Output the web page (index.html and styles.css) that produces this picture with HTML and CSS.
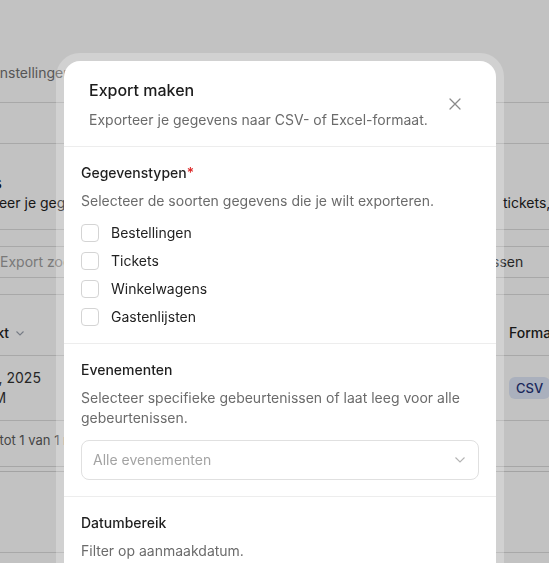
FILE: index.html
```html
<!DOCTYPE html>
<html lang="nl">
<head>
<meta charset="utf-8">
<title>Export maken</title>
<link rel="stylesheet" href="styles.css">
</head>
<body>
<div class="page">
  <div class="topbar"><span class="crumb">Instellingen</span></div>
  <div class="tabs"></div>
  <div class="pagehead">
    <h1 class="ph-title">Exports</h1>
    <div class="split">
      <p class="ph-desc">Exporteer je gegevens naar CSV- of Excel-formaat, inclusief bestellingen,</p>
      <p class="ph-desc-r">tickets, winkelwagens en gastenlijsten.</p>
    </div>
  </div>
  <div class="filters">
    <div class="search">Export zoeken...</div>
    <div class="fselect">Alle gebeurtenissen</div>
  </div>
  <div class="thead">
    <div class="th th-left">Aangemaakt
      <svg class="sort" width="8" height="5" viewBox="0 0 8 5"><path d="M0.5 0.5 L4 4 L7.5 0.5" fill="none" stroke="#9ca3af" stroke-width="1.1"/></svg>
    </div>
    <div class="th">Formaat</div>
  </div>
  <div class="trow">
    <div class="td-date">
      <span class="d1">12 mrt, 2025</span>
      <span class="d2">10:24 AM</span>
    </div>
    <div class="td-fmt"><span class="badge">CSV</span></div>
  </div>
  <div class="tfoot"><span class="count">Toont 1 tot 1 van 1 resultaten</span></div>
  <div class="cardend"></div>
  <div class="blank"></div>
</div>

<div class="overlay"></div>

<div class="modal" role="dialog" aria-labelledby="m-title">
  <div class="panel">
    <div class="m-head">
      <div class="m-titles">
        <h2 class="m-title" id="m-title">Export maken</h2>
        <p class="m-sub">Exporteer je gegevens naar CSV- of Excel-formaat.</p>
      </div>
      <button class="close" type="button" aria-label="Sluiten">
        <svg width="12" height="12" viewBox="0 0 12 12"><path d="M1 1 L11 11 M11 1 L1 11" fill="none" stroke="#8a8a8a" stroke-width="1.25" stroke-linecap="round"/></svg>
      </button>
    </div>

    <div class="sec">
      <div class="sec-label">Gegevenstypen<span class="req">*</span></div>
      <p class="sec-desc">Selecteer de soorten gegevens die je wilt exporteren.</p>
      <ul class="checks">
        <li class="check"><span class="box"></span><span class="clabel">Bestellingen</span></li>
        <li class="check"><span class="box"></span><span class="clabel">Tickets</span></li>
        <li class="check"><span class="box"></span><span class="clabel">Winkelwagens</span></li>
        <li class="check"><span class="box"></span><span class="clabel">Gastenlijsten</span></li>
      </ul>
    </div>

    <div class="sec">
      <div class="sec-label">Evenementen</div>
      <p class="sec-desc">Selecteer specifieke gebeurtenissen of laat leeg voor alle gebeurtenissen.</p>
      <div class="select">
        <span class="placeholder">Alle evenementen</span>
        <svg width="10" height="6" viewBox="0 0 10 6"><path d="M0.5 0.5 L5 5 L9.5 0.5" fill="none" stroke="#b3b3b3" stroke-width="1.1"/></svg>
      </div>
    </div>

    <div class="sec">
      <div class="sec-label">Datumbereik</div>
      <p class="sec-desc">Filter op aanmaakdatum.</p>
    </div>
  </div>
</div>
</body>
</html>
```
FILE: styles.css
```css
* { box-sizing: border-box; margin: 0; padding: 0; }

html, body {
  width: 549px;
  height: 563px;
  overflow: hidden;
}

body {
  font-family: Inter, "Noto Sans", "Liberation Sans", sans-serif;
  font-size: 14px;
  line-height: 20px;
  color: #1f1f1f;
  background: #ffffff;
}

/* ---------- background page ---------- */
.page {
  width: 549px;
  white-space: nowrap;
}

.topbar {
  height: 103px;
  padding-top: 63px;
  border-bottom: 1px solid #dddddd;
}

.crumb {
  display: inline-block;
  margin-left: -4px;
  color: #727272;
}

.tabs {
  height: 41px;
  border-bottom: 1px solid #dddddd;
}

.pagehead {
  padding: 29px 0 16px;
  border-bottom: 1px solid #dddddd;
}

.ph-title {
  font-size: 18px;
  line-height: 20px;
  font-weight: 600;
  color: #111111;
  margin-left: -65px;
}

.split {
  display: grid;
  grid-template-columns: 503px auto;
}

.ph-desc {
  margin-left: -44px;
  overflow: hidden;
  color: #222222;
}

.ph-desc-r {
  color: #222222;
}

.filters {
  display: flex;
  gap: 12px;
  padding: 16px 0;
  border-bottom: 1px solid #dddddd;
}

.search,
.fselect {
  flex: none;
  height: 32px;
  padding-left: 11px;
  line-height: 30px;
  border: 1px solid #dddddd;
  border-radius: 6px;
}

.search {
  width: 380px;
  margin-left: -12px;
  color: #a0a0a0;
}

.fselect {
  width: 300px;
  color: #333333;
}

.thead {
  display: grid;
  grid-template-columns: 509px auto;
  padding: 28px 0 12px;
  border-bottom: 1px solid #dddddd;
}

.th {
  font-weight: 500;
  color: #222222;
}

.th-left {
  margin-left: -75px;
  display: flex;
  align-items: center;
  gap: 7px;
}

.trow {
  display: grid;
  grid-template-columns: 509px auto;
  align-items: center;
  padding: 12px 0;
  border-bottom: 1px solid #dddddd;
}

.td-date {
  display: flex;
  flex-direction: column;
  align-items: flex-start;
  margin-left: -42px;
  color: #333333;
}

.d2 {
  margin-left: -14px;
}

.badge {
  display: inline-flex;
  align-items: center;
  height: 22px;
  padding: 0 7px;
  border-radius: 6px;
  background: #e0e8f9;
  color: #26347a;
  font-size: 13px;
  font-weight: 500;
}

.tfoot {
  padding: 9px 0 16px;
  border-bottom: 1px solid #dadada;
}

.count {
  display: inline-block;
  margin-left: -48px;
  font-size: 13px;
  color: #5c5c5c;
}

.cardend {
  height: 5px;
  border-bottom: 1px solid #d6d6d6;
}

.blank {
  height: 81px;
  border-bottom: 1px solid #dddddd;
}

/* ---------- overlay ---------- */
.overlay {
  position: fixed;
  inset: 0;
  background: rgba(0, 0, 0, 0.24);
}

/* ---------- modal ---------- */
.modal {
  position: fixed;
  left: 56px;
  top: 53px;
  width: 448px;
  padding: 8px;
  border-radius: 24px;
  background: rgba(255, 255, 255, 0.24);
}

.panel {
  background: #ffffff;
  border-radius: 16px;
  height: 600px;
  overflow: hidden;
}

.m-head {
  display: flex;
  align-items: center;
  justify-content: space-between;
  padding: 16px 29px 16px 25px;
  border-bottom: 1px solid #ededed;
}

.m-title {
  font-size: 16px;
  line-height: 26px;
  font-weight: 500;
  color: #1c1c1c;
}

.m-sub {
  margin-top: 7px;
  font-size: 14px;
  line-height: 20px;
  color: #6b6b6b;
}

.close {
  width: 24px;
  height: 24px;
  display: grid;
  place-items: center;
  border: 0;
  background: transparent;
}

.sec {
  padding: 16px 17px;
  border-bottom: 1px solid #ededed;
}

.sec-label {
  font-weight: 500;
  color: #1f1f1f;
}

.req {
  color: #dc2626;
}

.sec-desc {
  margin-top: 8px;
  color: #6b6b6b;
  white-space: normal;
}

.checks {
  list-style: none;
  margin-top: 12px;
  display: flex;
  flex-direction: column;
  gap: 8px;
}

.check {
  display: flex;
  align-items: center;
  gap: 12px;
  height: 20px;
}

.box {
  width: 18px;
  height: 18px;
  border: 1px solid #d4d4d4;
  border-radius: 4px;
  background: #ffffff;
}

.clabel {
  color: #222222;
}

.select {
  margin-top: 12px;
  height: 40px;
  display: flex;
  align-items: center;
  justify-content: space-between;
  padding: 0 13px 0 11px;
  border: 1px solid #e0e0e0;
  border-radius: 8px;
}

.placeholder {
  color: #a3a3a3;
}
```
